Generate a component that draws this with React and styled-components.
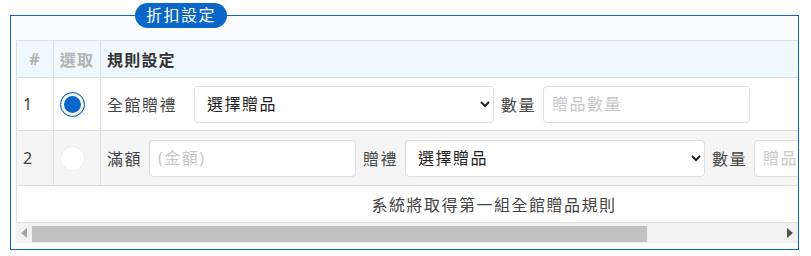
import styled, { createGlobalStyle } from "styled-components";

const GlobalStyle = createGlobalStyle`
    body {
        margin: 0;
        background: #fff;
        font-family: "Noto Sans", "Noto Sans CJK TC", sans-serif;
        color: #444;
    }
`;

const rules = [
    { id: 1, checked: true, type: "all" },
    { id: 2, checked: false, type: "amount" },
];

// visible width of the scroll area vs. full table width
const VIEW = 783;
const CONTENT = 956;
const TRACK = VIEW - 32;
const thumbWidth = Math.round((TRACK * VIEW) / CONTENT);

const App = () => {
    return (
        <>
            <GlobalStyle />
            <Box>
                <Legend>折扣設定</Legend>
                <Scroller>
                    <Table>
                        <colgroup>
                            <col style={{ width: 37 }} />
                            <col style={{ width: 47 }} />
                            <col />
                        </colgroup>
                        <thead>
                            <tr>
                                <Th $muted $center>#</Th>
                                <Th $muted $center>選取</Th>
                                <Th>規則設定</Th>
                            </tr>
                        </thead>
                        <tbody>
                            {rules.map((r) => (
                                <Row key={r.id} $striped={r.id % 2 === 0}>
                                    <Td>{r.id}</Td>
                                    <Td>
                                        <Radio $checked={r.checked} />
                                    </Td>
                                    <Td>
                                        {r.type === "all" ? (
                                            <Line>
                                                <Label $wide>全館贈禮</Label>
                                                <Select defaultValue="">
                                                    <option value="">選擇贈品</option>
                                                </Select>
                                                <Label>數量</Label>
                                                <Input placeholder="贈品數量" />
                                            </Line>
                                        ) : (
                                            <Line>
                                                <Label>滿額</Label>
                                                <Input placeholder="(金額)" />
                                                <Label>贈禮</Label>
                                                <Select defaultValue="">
                                                    <option value="">選擇贈品</option>
                                                </Select>
                                                <Label>數量</Label>
                                                <Input placeholder="贈品數量" />
                                            </Line>
                                        )}
                                    </Td>
                                </Row>
                            ))}
                            <tr>
                                <Note colSpan={3}>系統將取得第一組全館贈品規則</Note>
                            </tr>
                        </tbody>
                    </Table>
                </Scroller>
                <ScrollBar>
                    <ScrollButton>
                        <svg width="6" height="10" viewBox="0 0 6 10">
                            <polygon points="6,0 0,5 6,10" fill="#a3a3a3" />
                        </svg>
                    </ScrollButton>
                    <Track>
                        <Thumb style={{ width: thumbWidth }} />
                    </Track>
                    <ScrollButton>
                        <svg width="6" height="10" viewBox="0 0 6 10">
                            <polygon points="0,0 6,5 0,10" fill="#505050" />
                        </svg>
                    </ScrollButton>
                </ScrollBar>
            </Box>
        </>
    );
};

const Box = styled.fieldset`
    margin: 3px 12px 0 10px;
    padding: 12px 0 6px 5px;
    min-width: 0;
    border: 1px solid #0a66c8;
    background: #fafcfe;
`;

const Legend = styled.legend`
    margin-left: 119px;
    padding: 0 11px;
    height: 25px;
    line-height: 25px;
    border-radius: 13px;
    background: #0a66c8;
    color: #fff;
    font-size: 16px;
    letter-spacing: 1.5px;
`;

const Scroller = styled.div`
    overflow: hidden;
    background: #fff;
`;

const ScrollBar = styled.div`
    display: flex;
    height: 20px;
    background: #f1f1f1;
`;

const ScrollButton = styled.div`
    flex: 0 0 16px;
    display: flex;
    align-items: center;
    justify-content: center;
`;

const Track = styled.div`
    flex: 1;
    padding: 3px 0 1px;
`;

const Thumb = styled.div`
    height: 100%;
    background: #c1c1c1;
`;

const Table = styled.table`
    width: ${CONTENT}px;
    border-collapse: collapse;
    table-layout: fixed;
    font-size: 16px;
    letter-spacing: 1.5px;
`;

const Th = styled.th`
    height: 36px;
    padding: ${(p) => (p.$center ? "0" : "0 6px")};
    text-align: ${(p) => (p.$center ? "center" : "left")};
    white-space: nowrap;
    letter-spacing: 1.2px;
    background: #eef8fd;
    border: 1px solid #dedede;
    color: ${(p) => (p.$muted ? "#b4b4b4" : "#333")};
    font-weight: 700;
`;

const Row = styled.tr`
    background: ${(p) => (p.$striped ? "#f5f5f5" : "#fff")};
    height: ${(p) => (p.$striped ? "55px" : "53px")};
`;

const Td = styled.td`
    padding: 0 6px;
    border: 1px solid #dedede;
    color: #444;
`;

const Line = styled.div`
    display: flex;
    align-items: center;
    gap: 7px;
`;

const Label = styled.span`
    white-space: nowrap;
    color: #444;
    margin-right: ${(p) => (p.$wide ? "10px" : "0")};
`;

const Radio = styled.span`
    display: block;
    width: 25px;
    height: 25px;
    box-sizing: border-box;
    border-radius: 50%;
    border: ${(p) => (p.$checked ? "1.5px solid #0a66c8" : "1px solid #eee")};
    box-shadow: ${(p) => (p.$checked ? "inset 0 0 0 3px #fff" : "none")};
    background: ${(p) => (p.$checked ? "#0a66c8" : "#fff")};
`;

const Select = styled.select`
    width: 300px;
    height: 37px;
    padding: 0 8px;
    border: 1px solid #dedede;
    border-radius: 4px;
    background: #fff;
    color: #222;
    font-family: inherit;
    font-size: 16px;
    letter-spacing: 1.5px;
`;

const Input = styled.input`
    width: 207px;
    height: 37px;
    box-sizing: border-box;
    padding: 0 8px;
    border: 1px solid #dedede;
    border-radius: 4px;
    background: #fff;
    font-family: inherit;
    font-size: 16px;
    letter-spacing: 1.5px;

    &::placeholder {
        color: #c8c8c8;
    }
`;

const Note = styled.td`
    height: 36px;
    padding: 0;
    text-align: center;
    border: 1px solid #dedede;
    color: #444;
`;

export default App;
